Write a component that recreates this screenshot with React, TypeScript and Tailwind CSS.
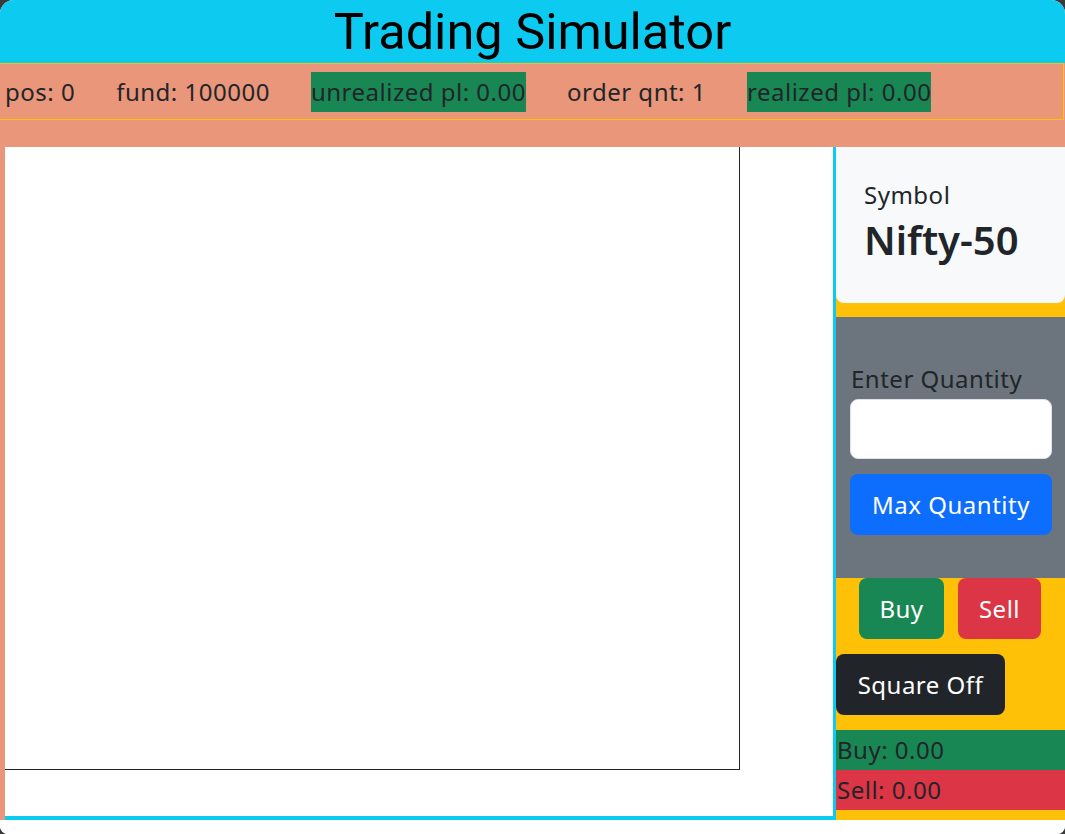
import React from "react";

export default function App() {
  const body = { fontFamily: '"Noto Sans", "Open Sans", sans-serif' };
  return (
    <div className="w-[1065px] h-[834px] bg-[#3a3a3a] overflow-hidden" style={body}>
      <div className="w-full h-full bg-white rounded-t-[14px] rounded-b-[8px] overflow-hidden flex flex-col">
        {/* Header */}
        <div className="h-[63px] bg-[#0dcaf0] flex items-center justify-center shrink-0">
          <h1
            className="text-[50.5px] leading-none text-black font-normal pt-[2px]"
            style={{ fontFamily: 'Roboto, "Liberation Sans", sans-serif' }}
          >
            Trading Simulator
          </h1>
        </div>
        {/* Stats area */}
        <div className="bg-[#e9967a] shrink-0">
          <div className="h-[57px] border border-l-0 border-[#ffc107] mr-px flex items-center gap-[41px] pl-[5px] pt-px text-[24px] tracking-[0.5px] text-[#212529]">
            <span>pos: 0</span>
            <span>fund: 100000</span>
            <span className="bg-[#198754] leading-[40px]">unrealized pl: 0.00</span>
            <span>order qnt: 1</span>
            <span className="bg-[#198754] leading-[40px]">realized pl: 0.00</span>
          </div>
          <div className="h-[27px]" />
        </div>
        {/* Main */}
        <div className="h-[673px] flex shrink-0">
          <div className="flex-1 bg-[#e9967a] pl-[5px] flex">
            <div className="flex-1 bg-white border-r-[3px] border-b-[4px] border-[#0dcaf0]">
              <div className="w-[735px] h-[623px] border-r border-b border-[#212529]" />
            </div>
          </div>
          <div className="w-[229px] bg-[#ffc107] flex flex-col text-[24px] tracking-[0.5px] text-[#212529]">
            <div className="h-[156px] bg-[#f8f9fa] rounded-b-[8px] pl-[28px] pt-[30px]">
              <div className="leading-[36px]">Symbol</div>
              <div className="mt-[3px] text-[40px] leading-[48px] font-semibold tracking-normal">Nifty-50</div>
            </div>
            <div className="mt-[14px] h-[261px] bg-[#6c757d] px-[14px] pt-[44px]">
              <div className="leading-[36px] pl-px">Enter Quantity</div>
              <div className="mt-[2px] h-[60px] w-[202px] bg-white border border-[#dee2e6] rounded-[8px]" />
              <button className="mt-[15px] h-[61px] w-[202px] bg-[#0d6efd] rounded-[8px] text-white text-[24px] tracking-[0.5px] flex items-center justify-center">
                Max Quantity
              </button>
            </div>
            <div className="flex pl-[23px] gap-[14px]">
              <button className="h-[61px] w-[85px] bg-[#198754] rounded-[8px] text-white text-[24px] tracking-[0.5px] pt-px">Buy</button>
              <button className="h-[61px] w-[83px] bg-[#dc3545] rounded-[8px] text-white text-[24px] tracking-[0.5px] pt-px">Sell</button>
            </div>
            <button className="mt-[15px] h-[61px] w-[169px] bg-[#212529] rounded-[8px] text-white text-[24px] tracking-[0.5px] pt-px">
              Square Off
            </button>
            <div className="mt-[15px] h-[40px] leading-[40px] bg-[#198754] pl-px">Buy: 0.00</div>
            <div className="h-[40px] leading-[40px] bg-[#dc3545] pl-px">Sell: 0.00</div>
          </div>
        </div>
        <div className="flex-1 bg-white" />
      </div>
    </div>
  );
}
